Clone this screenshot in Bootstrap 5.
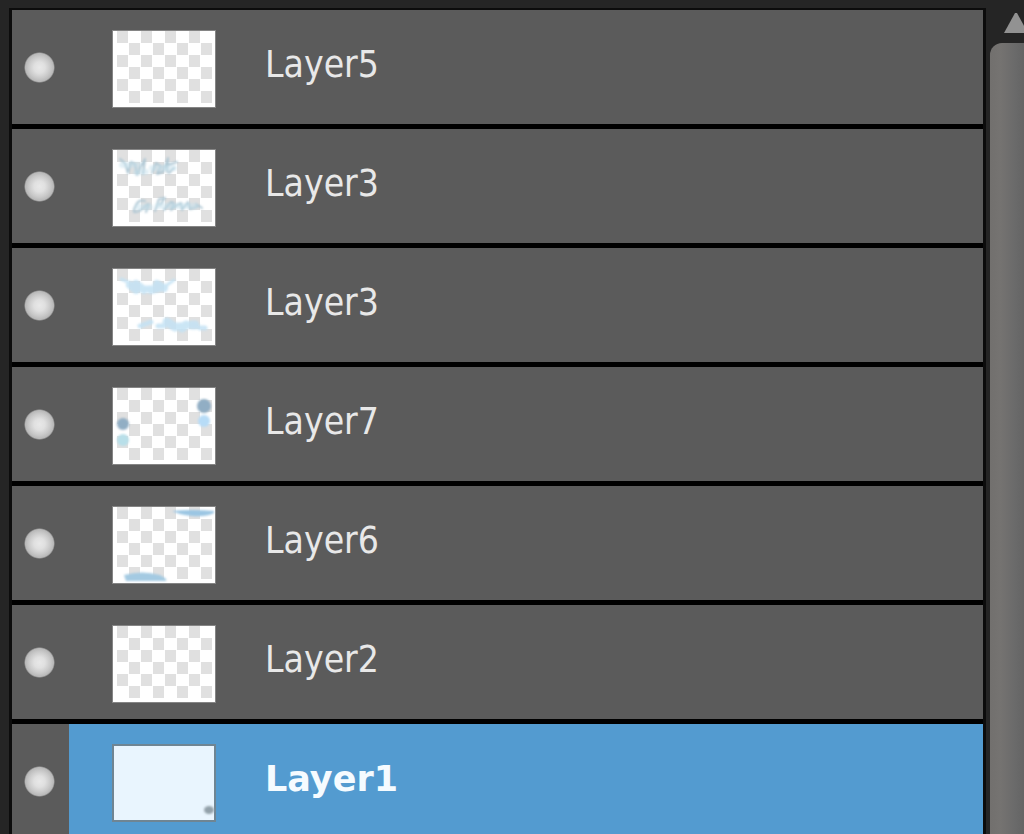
<!DOCTYPE html>
<html lang="en">
<head>
<meta charset="utf-8">
<meta name="viewport" content="width=device-width, initial-scale=1">
<title>Layers</title>
<link href="https://cdn.jsdelivr.net/npm/bootstrap@5.3.0/dist/css/bootstrap.min.css" rel="stylesheet">
<style>
  body { background: #252525; font-family: "DejaVu Sans Condensed", "DejaVu Sans", sans-serif; }
  .layers-panel { padding: 8px 0 0 9px; }
  .layer-list { border: 3px solid #0c0c0c; border-top-width: 2px; border-bottom: 0; background: #5b5b5b; }
  .layer-row { height: 119px; border-bottom: 5px solid #000; }
  .eye-toggle { width: 57px; padding: 0 0 0 12px; background: none; border: 0; text-align: left; }
  .eye-dot {
    display: block; width: 31px; height: 31px; border-radius: 50%;
    background: radial-gradient(circle, #e8e8e8 0, #e0e0e0 25%, #c8c8c8 50%, #b8b8b8 64%, #5b5b5b 71%);
  }
  .layer-pick { padding: 4px 0 0 43px; background: none; border: 0; color: #e8e8e8; font-size: 37px; line-height: 44px; }
  .layer-pick .thumb { width: 104px; height: 78px; margin-right: 49px; }
  .layer-name { padding-bottom: 8px; }
  .layer-row.selected .layer-pick { background: #539bd0; color: #f5fbff; font-family: "DejaVu Sans", sans-serif; font-weight: 700; font-size: 35px; }
  .scroll-column { width: 38px; padding: 8px 0 0 4px; }
  .scroll-up { height: 35px; padding: 4px 0 0 13px; background: none; border: 0; text-align: left; line-height: 0; }
  .scroll-up svg { display: block; }
  .scroll-thumb { border-radius: 12px 0 0 0; background: linear-gradient(90deg, #72706e 0, #757371 30%, #6a6a6a 75%, #646464 100%); }
</style>
</head>
<body class="vh-100 overflow-hidden">

<svg width="0" height="0" class="position-absolute" aria-hidden="true">
  <defs>
    <pattern id="checker" x="5" y="1" width="24" height="24" patternUnits="userSpaceOnUse">
      <rect width="24" height="24" fill="#fff"/>
      <rect width="11" height="12" fill="#e0e0e0"/>
      <rect x="12" y="12" width="11" height="12" fill="#e0e0e0"/>
    </pattern>
    <filter id="soft" x="-20%" y="-50%" width="140%" height="200%"><feGaussianBlur stdDeviation="1"/></filter>
    <symbol id="blank" viewBox="0 0 104 78">
      <rect x=".5" y=".5" width="103" height="77" fill="#fff" stroke="#858585"/>
      <rect x="5" y="1" width="96" height="72" fill="url(#checker)"/>
    </symbol>
  </defs>
</svg>

<main class="d-flex h-100">
  <section class="layers-panel flex-grow-1 overflow-hidden" aria-label="Layers">
    <ul class="layer-list list-unstyled mb-0">
      <li class="layer-row d-flex">
        <button class="eye-toggle" type="button" aria-label="Toggle Layer5"><span class="eye-dot"></span></button>
        <button class="layer-pick d-flex align-items-center flex-grow-1" type="button">
          <svg class="thumb" viewBox="0 0 104 78"><use href="#blank"/></svg>
          <span class="layer-name">Layer5</span>
        </button>
      </li>
      <li class="layer-row d-flex">
        <button class="eye-toggle" type="button" aria-label="Toggle Layer3 lines"><span class="eye-dot"></span></button>
        <button class="layer-pick d-flex align-items-center flex-grow-1" type="button">
          <svg class="thumb" viewBox="0 0 104 78"><use href="#blank"/>
            <g fill="none" stroke-linecap="round" stroke-linejoin="round" filter="url(#soft)">
              <path d="M8 10l5 4 3 10 3-11 4 2 2 11 4-9 4-7-2 15M40 24l4-10 5 3-4 8 6-2 5-14-1 14M52 17l13-4M57 24l5-5" stroke="#adc6d3" stroke-width="2"/>
              <path d="M10 16h16M24 23h10M40 19h22" stroke="#c6e1ee" stroke-width="6" opacity=".5"/>
              <path d="M33 52q-6-2-9 4t-2 7q6 1 13-8M34 63l3-8M43 62l4-12 6-1-5 7M52 61l7-8 3 1-3 7 6-5 4-2 1 7 6-8 2 7 7-2M84 55l6 4" stroke="#adc6d3" stroke-width="2"/>
              <path d="M26 58h12M46 57h37" stroke="#c6e1ee" stroke-width="6" opacity=".5"/>
            </g>
          </svg>
          <span class="layer-name">Layer3</span>
        </button>
      </li>
      <li class="layer-row d-flex">
        <button class="eye-toggle" type="button" aria-label="Toggle Layer3 fill"><span class="eye-dot"></span></button>
        <button class="layer-pick d-flex align-items-center flex-grow-1" type="button">
          <svg class="thumb" viewBox="0 0 104 78"><use href="#blank"/>
            <g fill="none" stroke="#c3e2f4" stroke-linecap="round" filter="url(#soft)" opacity=".85">
              <path d="M18 17l6 5M24 16l8 6M39 22l8-2M45 16l7 4" stroke-width="8"/>
              <path d="M9 11l7 3M34 19h5M55 17l7-5" stroke-width="3"/>
              <path d="M55 54l8 5M70 60l4-3M80 57h3" stroke-width="9"/>
              <path d="M28 58l11-4M46 58h6M66 57h12M88 60h5" stroke-width="5"/>
            </g>
          </svg>
          <span class="layer-name">Layer3</span>
        </button>
      </li>
      <li class="layer-row d-flex">
        <button class="eye-toggle" type="button" aria-label="Toggle Layer7"><span class="eye-dot"></span></button>
        <button class="layer-pick d-flex align-items-center flex-grow-1" type="button">
          <svg class="thumb" viewBox="0 0 104 78"><use href="#blank"/>
            <g filter="url(#soft)">
              <circle cx="11" cy="37" r="6" fill="#91aec4"/><circle cx="11" cy="53" r="6" fill="#b8dfe9"/>
              <circle cx="92" cy="19" r="7" fill="#91aec4"/><circle cx="92" cy="34" r="6" fill="#b7dcf7"/>
            </g>
          </svg>
          <span class="layer-name">Layer7</span>
        </button>
      </li>
      <li class="layer-row d-flex">
        <button class="eye-toggle" type="button" aria-label="Toggle Layer6"><span class="eye-dot"></span></button>
        <button class="layer-pick d-flex align-items-center flex-grow-1" type="button">
          <svg class="thumb" viewBox="0 0 104 78"><use href="#blank"/>
            <g filter="url(#soft)">
              <path d="M60 5q20-2 42 0v2q-8 4-22 3-12-1-20-5z" fill="#9bc6e3"/>
              <path d="M12 69q18-5 36 0 8 4 6 6H14z" fill="#a4cae2"/>
            </g>
          </svg>
          <span class="layer-name">Layer6</span>
        </button>
      </li>
      <li class="layer-row d-flex">
        <button class="eye-toggle" type="button" aria-label="Toggle Layer2"><span class="eye-dot"></span></button>
        <button class="layer-pick d-flex align-items-center flex-grow-1" type="button">
          <svg class="thumb" viewBox="0 0 104 78"><use href="#blank"/></svg>
          <span class="layer-name">Layer2</span>
        </button>
      </li>
      <li class="layer-row selected d-flex">
        <button class="eye-toggle" type="button" aria-label="Toggle Layer1"><span class="eye-dot"></span></button>
        <button class="layer-pick d-flex align-items-center flex-grow-1" type="button" aria-pressed="true">
          <svg class="thumb" viewBox="0 0 104 78">
            <rect x="1" y="1" width="102" height="76" fill="#e9f5fe" stroke="#6f8593" stroke-width="2"/>
            <ellipse cx="97" cy="66" rx="5" ry="4" fill="#92a0a9" filter="url(#soft)"/>
          </svg>
          <span class="layer-name">Layer1</span>
        </button>
      </li>
    </ul>
  </section>

  <aside class="scroll-column d-flex flex-column flex-shrink-0 overflow-hidden">
    <button class="scroll-up d-flex align-items-start" type="button" aria-label="Scroll up">
      <svg class="flex-shrink-0" width="26" height="22" viewBox="0 0 26 22"><path d="M14 1L25 21H1L12 1z" fill="#929292"/></svg>
    </button>
    <div class="scroll-thumb flex-grow-1"></div>
  </aside>
</main>

<script src="https://cdn.jsdelivr.net/npm/bootstrap@5.3.0/dist/js/bootstrap.bundle.min.js"></script>
</body>
</html>
